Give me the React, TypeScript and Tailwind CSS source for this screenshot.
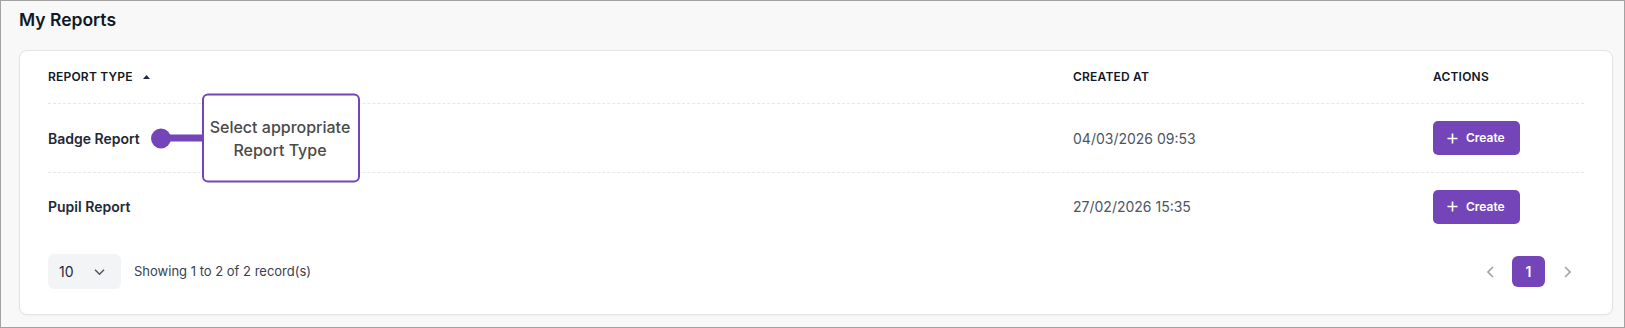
/* ── MyReports — report type list with guide callout ── */

const font = { fontFamily: "Inter, 'Noto Sans', sans-serif" };

interface ReportRow {
  name: string;
  createdAt: string;
}

const rows: ReportRow[] = [
  { name: "Badge Report", createdAt: "04/03/2026 09:53" },
  { name: "Pupil Report", createdAt: "27/02/2026 15:35" },
];

function CreateButton() {
  return (
    <button className="flex h-[34px] w-[87px] items-center gap-[8px] rounded-[5px] bg-[#7445b9] pl-[14px] text-[12px] font-semibold text-white">
      <svg width="11" height="11" viewBox="0 0 12 12" fill="none" stroke="currentColor" strokeWidth="1.8">
        <path d="M6 0.5v11M0.5 6h11" />
      </svg>
      Create
    </button>
  );
}

function Callout() {
  return (
    <div className="absolute left-[103px] top-1/2 flex -translate-y-1/2 items-center">
      <span className="h-[20px] w-[20px] rounded-full bg-[#7445b9]" />
      <span className="-ml-[2px] h-[7px] w-[33px] bg-[#7445b9]" />
      <div className="flex h-[89px] w-[158px] flex-col items-center justify-center rounded-[6px] border-2 border-[#7445b9] bg-white pr-[2px] text-[16px] font-medium leading-[23px] text-[#4a4a4a]">
        <span>Select appropriate</span>
        <span>Report Type</span>
      </div>
    </div>
  );
}

export default function App() {
  return (
    <div
      className="h-[328px] w-[1625px] border border-[#a3a3a3] bg-[#f8f8f8] pl-[18px] pr-[11px] pt-[7px]"
      style={font}
    >
      <h1 className="text-[17.5px] font-semibold leading-[24px] text-[#111827]">My Reports</h1>

      <div className="mt-[18px] h-[265px] rounded-[8px] border border-[#e4e4e7] bg-white px-7 shadow-[0_1px_2px_rgba(0,0,0,0.04)]">
        {/* Header row */}
        <div className="grid h-[53px] grid-cols-[1025px_360px_1fr] items-center border-b border-dashed border-[#e5e7eb] text-[12px] font-semibold uppercase tracking-[0.2px] text-[#111827]">
          <div className="flex items-center gap-[10px]">
            <span>Report Type</span>
            <svg width="7" height="4" viewBox="0 0 7 4" fill="#1f2937">
              <path d="M3.5 0L7 4H0z" />
            </svg>
          </div>
          <div>Created At</div>
          <div>Actions</div>
        </div>

        {/* Rows */}
        {rows.map((row, i) => (
          <div
            key={row.name}
            className={`grid grid-cols-[1025px_360px_1fr] items-center ${
              i === 0 ? "h-[69px] border-b border-dashed border-[#e5e7eb]" : "h-[67px]"
            }`}
          >
            <div className="relative flex h-full items-center text-[14px] font-semibold text-[#1f2937]">
              {row.name}
              {i === 0 && <Callout />}
            </div>
            <div className="text-[14px] text-[#4b5563]">{row.createdAt}</div>
            <div>
              <CreateButton />
            </div>
          </div>
        ))}

        {/* Footer */}
        <div className="flex items-center justify-between pt-[14px]">
          <div className="flex items-center gap-[13px]">
            <div className="flex h-[35px] w-[73px] items-center justify-between rounded-[6px] bg-[#f3f4f6] pl-[11px] pr-[16px] text-[14px] text-[#1f2937]">
              <span>10</span>
              <svg width="11" height="6" viewBox="0 0 11 6" fill="none" stroke="#4b5563" strokeWidth="1.5">
                <path d="M1 0.8l4.5 4.4 4.5-4.4" />
              </svg>
            </div>
            <span className="text-[13px] text-[#374151]">Showing 1 to 2 of 2 record(s)</span>
          </div>

          <div className="flex items-center gap-[6px]">
            <button className="flex h-[31px] w-[32px] items-center justify-center">
              <svg width="7" height="12" viewBox="0 0 7 12" fill="none" stroke="#9ca3af" strokeWidth="1.6">
                <path d="M6 1L1 6l5 5" />
              </svg>
            </button>
            <button className="flex h-[31px] w-[33px] items-center justify-center rounded-[6px] bg-[#7445b9] text-[14px] font-semibold text-white">
              1
            </button>
            <button className="flex h-[31px] w-[33px] items-center justify-center">
              <svg width="7" height="12" viewBox="0 0 7 12" fill="none" stroke="#9ca3af" strokeWidth="1.6">
                <path d="M1 1l5 5-5 5" />
              </svg>
            </button>
          </div>
        </div>
      </div>
    </div>
  );
}
